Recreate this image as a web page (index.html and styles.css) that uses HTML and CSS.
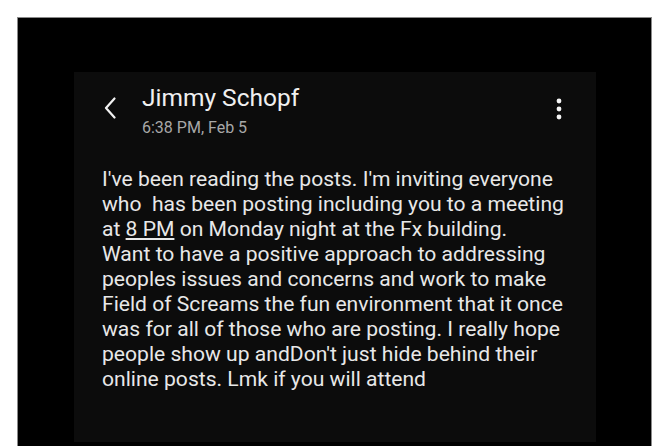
FILE: index.html
```html
<!DOCTYPE html>
<html>
<head>
<meta charset="utf-8">
<link rel="stylesheet" href="styles.css">
</head>
<body>
<div class="frame">
  <div class="panel">
    <div class="header">
      <svg class="back" width="14" height="22" viewBox="0 0 14 22"><path d="M11.5 1.5 L3 11 L11.5 20.5" fill="none" stroke="#f2f2f2" stroke-width="2.2" stroke-linecap="round" stroke-linejoin="round"/></svg>
      <div class="who">
        <div class="name">Jimmy Schopf</div>
        <div class="time">6:38 PM, Feb 5</div>
      </div>
      <svg class="more" width="6" height="22" viewBox="0 0 6 22"><circle cx="3" cy="3" r="2.4" fill="#f5f5f5"/><circle cx="3" cy="11" r="2.4" fill="#f5f5f5"/><circle cx="3" cy="19" r="2.4" fill="#f5f5f5"/></svg>
    </div>
    <p class="message">I've been reading the posts. I'm inviting everyone<br>who&nbsp; has been posting including you to a meeting<br>at <span class="link">8 PM</span> on Monday night at the Fx building.<br>Want to have a positive approach to addressing<br>peoples issues and concerns and work to make<br>Field of Screams the fun environment that it once<br>was for all of those who are posting. I really hope<br>people show up andDon't just hide behind their<br>online posts. Lmk if you will attend</p>
  </div>
</div>
</body>
</html>
```
FILE: styles.css
```css
html, body {
  margin: 0;
  padding: 0;
  background: #ffffff;
  height: 446px;
  overflow: hidden;
}
.frame {
  margin: 17px 17px 0 17px;
  height: 440px;
  background: #000000;
  border: 1px solid #8a8a8a;
  border-bottom: none;
  padding: 54px 55px 0 56px;
  box-sizing: border-box;
}
.panel {
  background: #0c0c0c;
  height: 370px;
  font-family: Roboto, "Liberation Sans", sans-serif;
}
.header {
  display: flex;
  align-items: flex-start;
  padding: 12px 0 0 29px;
}
.back {
  display: block;
  margin-top: 13px;
}
.who {
  margin-left: 25px;
  flex: 1;
}
.name {
  font-size: 24.5px;
  line-height: 28px;
  color: #f0f0f0;
}
.time {
  margin-top: 6px;
  font-size: 16px;
  line-height: 19px;
  color: #a8a8a8;
}
.more {
  display: block;
  margin: 14px 34px 0 0;
}
.message {
  margin: 29px 0 0 28px;
  font-size: 21.1px;
  line-height: 25px;
  color: #e8e8e8;
  white-space: nowrap;
}
.link {
  text-decoration: underline;
  text-underline-offset: 2px;
}
```
